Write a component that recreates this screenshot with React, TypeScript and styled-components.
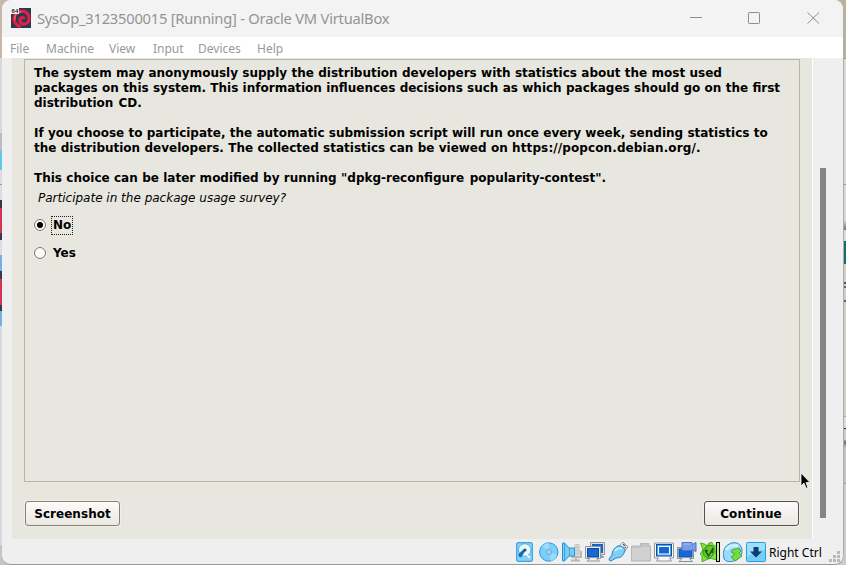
import React from "react";
import styled, { createGlobalStyle } from "styled-components";

const GlobalStyle = createGlobalStyle`
  * { box-sizing: border-box; }
  body { margin: 0; overflow: hidden; }
`;

const Desktop = styled.div`
  width: 846px;
  height: 565px;
  padding: 0 2px 0 2px;
  background:
    linear-gradient(#c9b8a8 0 58px, #d9d9d9 58px 133px, #bcbcbc 133px 151px, #5fc6ee 151px 170px, #ddd 170px 184px, #999 184px 185px, #ddd 185px 200px, #343848 200px 208px, #d83355 208px 233px, #343848 233px 240px, #ddd 240px 255px, #76b0e6 255px 271px, #343848 271px 279px, #d83355 279px 305px, #343848 305px 311px, #76b0e6 311px 326px, #d9d9d9 326px 545px, #c5c5c5 545px) 0 0 / 20px 100% no-repeat,
    linear-gradient(#b8b399 0 58px, #999 58px 59px, #dadada 59px 184px, #999 184px 185px, #dadada 185px 220px, #777 229px 230px, #ddd 230px 241px, #116e6b 241px 264px, #d0d0c6 264px 282px, #555 282px 284px, #ccc 284px 286px, #666 286px 288px, #cfcfc4 288px 300px, #666 300px 302px, #cfcfc4 302px 416px, #aaa 416px 417px, #ddd 417px 428px, #222 428px 429px, #ccc 429px 440px, #777 441px 443px, #c4c4c4 448px 483px, #999 483px 484px, #ccc 484px) 100% 0 / 20px 100% no-repeat,
    #bbb;
`;

const Window = styled.div`
  display: flex;
  flex-direction: column;
  height: 565px;
  overflow: hidden;
  border-right: 1px solid #adadad;
  border-bottom: 1px solid #999;
  border-radius: 9px;
  background: #efefef;
`;

const TitleBar = styled.header`
  display: flex;
  align-items: center;
  flex: none;
  height: 37px;
  padding: 0 23px 1px 9px;
  background: #f3f3f3;
`;

const Title = styled.div`
  flex: 1;
  margin-left: 6px;
  font: 14.7px/20px "Noto Sans", sans-serif;
  letter-spacing: -0.22px;
  white-space: nowrap;
  color: #939393;
`;

const Controls = styled.div`
  display: flex;
  gap: 46px;
`;

const MenuBar = styled.nav`
  display: flex;
  flex: none;
  align-items: center;
  height: 21px;
  padding-left: 8px;
  gap: 16px;
  background: #fff;
`;

const MenuItem = styled.span<{ $width: number }>`
  width: ${(p) => p.$width}px;
  font: 12px/21px "Noto Sans", sans-serif;
  padding-top: 1px;
  white-space: nowrap;
  color: #999;
`;

const Viewport = styled.div`
  display: flex;
  flex: none;
  height: 481px;
  padding-left: 10px;
`;

const Guest = styled.main`
  position: relative;
  display: flex;
  flex-direction: column;
  width: 800px;
  padding: 1px 12px 0;
  background: #e8e7df;
  font-family: "DejaVu Sans", sans-serif;
  color: #000;
`;

const ScrollTrack = styled.div`
  width: 14px;
  padding: 110px 0 0 7px;
  border-left: 1px solid #fff;
`;

const ScrollThumb = styled.div`
  width: 6px;
  height: 350px;
  background: #858585;
`;

const Panel = styled.section`
  height: 423px;
  border: 1px solid #bab5a5;
  padding: 6px 9px;
`;

const Paragraph = styled.div`
  margin-bottom: 15px;
`;

/* Word spacing keeps the fi and fl ligatures that letter spacing would break. */
const Line = styled.div<{ $gap: number }>`
  font-size: 12px;
  font-weight: bold;
  line-height: 15px;
  word-spacing: ${(p) => p.$gap}px;
  white-space: nowrap;
`;

const Address = styled.span`
  letter-spacing: 0.11px;
`;

const Command = styled.span`
  word-spacing: 1.5px;
`;

const Question = styled.div`
  margin: -10px 0 0 4px;
  font-size: 12px;
  font-style: italic;
  line-height: 15px;
  white-space: nowrap;
`;

const Options = styled.div`
  display: flex;
  flex-direction: column;
  gap: 8px;
  margin-top: 9px;
`;

const Option = styled.label`
  display: flex;
  align-items: center;
  height: 20px;
  gap: 5px;
`;

const Radio = styled.span<{ $checked?: boolean }>`
  width: 12px;
  height: 12px;
  border: 1px solid #77716a;
  border-radius: 50%;
  box-shadow: 0 0 0 0.6px #f7f3ed;
  background: ${(p) =>
    p.$checked ? "radial-gradient(circle, #050505 0 2.7px, #fbfdf8 3.5px)" : "#fbfdf8"};
`;

const OptionText = styled.span<{ $focused?: boolean }>`
  padding: 0 1px;
  border: 1px dotted ${(p) => (p.$focused ? "#222" : "transparent")};
  font-size: 12px;
  font-weight: bold;
  line-height: 17px;
`;

const Actions = styled.footer`
  display: flex;
  justify-content: space-between;
  margin-top: 19px;
  padding: 0 1px;
`;

const Button = styled.button<{ $primary?: boolean }>`
  width: 95px;
  height: 25px;
  padding: 1px ${(p) => (p.$primary ? 1 : 0)}px 0 0;
  border: 1px solid ${(p) => (p.$primary ? "#55534b" : "#898270")};
  border-radius: 3px;
  background: linear-gradient(#fcfcfb, #f3f1ee 50%, #e9e8e2);
  box-shadow: 0 0 0 1px #f0eee8;
  font: bold 12px/22px "DejaVu Sans", sans-serif;
  letter-spacing: ${(p) => (p.$primary ? 0.12 : 0.04)}px;
  color: #000;
`;

const Pointer = styled.svg`
  position: absolute;
  left: 788px;
  top: 414px;
`;

const StatusBar = styled.div`
  display: flex;
  justify-content: flex-end;
  align-items: flex-start;
  flex: 1;
  padding-top: 3px;
`;

const StatusIcons = styled.div`
  display: flex;
  gap: 3px;
`;

const HostKey = styled.span`
  width: 54px;
  margin: 0 6px 0 3px;
  font: 12px/21px "Noto Sans", sans-serif;
  white-space: nowrap;
  color: #000;
`;

const Grip = styled.svg`
  margin-top: 9px;
`;

const Glyph = ({ children }: { children: React.ReactNode }) => (
  <svg width="20" height="20" viewBox="0 0 20 20">{children}</svg>
);

const DebianLogo = () => (
  <svg width="20" height="20" viewBox="0 0 20 20">
    <rect width="20" height="20" fill="#30394a" />
    <path d="M8.5 18.3C3.6 16.5 1.8 11 4 7c2.2-3.9 8-5 11.500-2.2 3.7 3 3.3 9-.6 10.8-3.5 1.5-6.6-1.2-5.8-4.1.5-1.8 2.3-2.5 3.6-1.6" fill="none" stroke="#dd2049" strokeWidth="3.2" strokeLinecap="round" />
    <path d="M4 12C3 8 6 4 10.5 3.8" fill="none" stroke="#ff8296" strokeWidth="1" />
    <rect width="8" height="6" fill="#f5f5f5" />
    <text x=".6" y="5.2" fontFamily="Liberation Sans, sans-serif" fontSize="6" fontWeight="bold" fill="#222">64</text>
  </svg>
);

const DiskIcon = () => (
  <Glyph>
    <rect x=".7" y=".7" width="15.6" height="18.6" rx="1" fill="#83d2fc" stroke="#2493dc" />
    <circle cx="8.7" cy="8" r="6.2" fill="#e9f7ff" stroke="#278ecb" strokeWidth=".6" />
    <path d="M9.5 8.5 5 15.5Q1.5 15 3 11.5L8 7z" fill="#116ab3" />
    <circle cx="9" cy="8" r="1.5" fill="#15558c" />
    <path d="m10 12 4 4" stroke="#fff" strokeWidth="1.5" />
  </Glyph>
);

const DiscIcon = () => (
  <Glyph>
    <circle cx="9.8" cy="10" r="9.2" fill="#7bcffb" stroke="#2999dc" />
    <path d="M10 10 3 4q3-3 7-3zM10 10l8 3q-2 5-6 6z" fill="#99dcff" />
    <circle cx="10" cy="10" r="2.7" fill="#b9eaff" stroke="#3a9cd5" strokeWidth=".7" />
    <circle cx="10" cy="10" r="1.2" fill="#fff" stroke="#777" strokeWidth=".6" />
  </Glyph>
);

const AudioIcon = () => (
  <Glyph>
    <rect x="12" y="2" width="6" height="12" rx="2" fill="#c4c4c4" />
    <path d="M10 10v5h9V9M14 15v4M9 18.5h9" fill="none" stroke="#b8b8b8" strokeWidth="2" />
    <path d="M12 4h6M12 7h6M12 10h6M12 13h6" stroke="#e4e4e4" />
    <path d="M.5 1h2L7 6h5.5v8H7l-4.5 5h-2z" fill="#7acbf6" stroke="#2795d5" />
    <path d="M2.5 1v18M7.5 6v8" stroke="#2795d5" strokeWidth=".7" />
  </Glyph>
);

const NetworkIcon = () => (
  <Glyph>
    <path d="M5.5.5h14v12h-3v2h2v1H8v-2H5.5z" fill="#e1e1e1" stroke="#8d989e" />
    <rect x="7" y="2" width="11" height="9" fill="#1763c2" />
    <path d="M.5 4.5h15v12h-4l3 2.5H2l3-2.5H.5z" fill="#ededed" stroke="#8d989e" />
    <rect x="2.5" y="6.5" width="11" height="8.5" fill="#1769d2" stroke="#0e489a" />
  </Glyph>
);

const UsbIcon = () => (
  <Glyph>
    <path d="m11 4 4-4 5 5-4 5z" fill="#f1f1f1" stroke="#92999d" />
    <path d="m15 2 2 2M17 5l1 1" stroke="#555" strokeWidth="1.2" />
    <path d="M10 4q3-1 6 2 2 3 0 5-2 5-8 5l-5 3q-2 0-2-2l3-4Q4 7 10 4z" fill="#80cef7" stroke="#2b86c1" />
    <path d="M7 9q3-4 7-2" fill="none" stroke="#c1eeff" strokeWidth="2" />
  </Glyph>
);

const FolderIcon = () => (
  <Glyph>
    <path d="M.5 19V4h9V1.500H18V4h1.500v15z" fill="#c5c5c5" stroke="#b8b8b8" />
    <path d="M1 6q8 1 11-1h7v13H1z" fill="#d1d1d1" />
  </Glyph>
);

const DisplayIcon = () => (
  <Glyph>
    <path d="M.5 1h19v15h-4l2 3h-15l2-3h-4z" fill="#f8f8f8" stroke="#8e9ba1" />
    <rect x="2.5" y="2.5" width="15" height="11.5" fill="#4ca3ef" stroke="#164f9d" />
    <rect x="4.5" y="4.5" width="11" height="7.5" fill="#1269d3" stroke="#fff" />
  </Glyph>
);

const RecordingIcon = () => (
  <Glyph>
    <path d="M.5 5.5h16v11h-4l3 3H2l3-3H.5z" fill="#ededed" stroke="#87939a" />
    <rect x="2" y="7" width="13" height="8" fill="#1768d0" stroke="#1151a8" />
    <path d="M5 .5h10v2l4-2v9l-4-2v1H5z" fill="#789ce9" stroke="#4a75c8" />
    <path d="M6 2h8" stroke="#a8c1fa" />
  </Glyph>
);

const TurtleIcon = () => (
  <Glyph>
    <path d="M.5 1l4 1 3 2Q8 0 12 .5L14 4l4-1v4l-3 3 2 3v5l-4-1-3-1-4 2-4 2V14L0 12l3-4z" fill="#7ee33b" stroke="#3a9a19" strokeWidth=".8" />
    <path d="M7 4q5-2 7 2 1 7-5 11-7-3-6-9z" fill="#62c92b" stroke="#318c1b" />
    <path d="m5 8 3.5 6L13 6M5 8l3 1M13 6l-1 5" fill="none" stroke="#255d17" strokeWidth="1.5" />
    <rect x="16.5" y=".5" width="3" height="19" fill="#b9f58c" stroke="#000" />
  </Glyph>
);

const MouseIcon = () => (
  <Glyph>
    <path d="M1 17Q-2 5 8 1q9-2 11 6 1 9-8 12-7 2-10-2z" fill="#98dbff" stroke="#388fc6" />
    <path d="M3 8q5-6 12-4" fill="none" stroke="#c9f0ff" strokeWidth="3" />
    <path d="m9 8 7-2 2 3-2 2 3 3-7 5-4-4 4-3-4-2z" fill="#70dd40" stroke="#419628" strokeWidth=".8" />
  </Glyph>
);

const HostIcon = () => (
  <Glyph>
    <rect x=".5" y=".5" width="19" height="19" rx="1" fill="#74cefa" stroke="#2a9dda" />
    <path d="M1 1h18v7Q10 8 1 15z" fill="#9be1ff" />
    <path d="M7.5 5h5v4.5H16l-6 6-6-6h3.5z" fill="#123c72" />
  </Glyph>
);

const statusIcons = [DiskIcon, DiscIcon, AudioIcon, NetworkIcon, UsbIcon, FolderIcon, DisplayIcon, RecordingIcon, TurtleIcon, MouseIcon, HostIcon];

const menus: [string, number][] = [["File", 20], ["Machine", 47], ["View", 28], ["Input", 29], ["Devices", 43], ["Help", 26]];

export default function App() {
  return (
    <>
      <GlobalStyle />
      <Desktop>
        <Window>
          <TitleBar>
            <DebianLogo />
            <Title>SysOp_3123500015 [Running] - Oracle VM VirtualBox</Title>
            <Controls>
              <svg width="12" height="12"><path d="M0 5.5h12" stroke="#929292" /></svg>
              <svg width="12" height="12"><rect x=".5" y=".5" width="11" height="11" rx=".8" fill="none" stroke="#8d8d8d" /></svg>
              <svg width="14" height="12"><path d="m1.5.5 11.5 11M13 .5 1.5 11.5" stroke="#8d8d8d" /></svg>
            </Controls>
          </TitleBar>
          <MenuBar>
            {menus.map(([name, width]) => <MenuItem key={name} $width={width}>{name}</MenuItem>)}
          </MenuBar>
          <Viewport>
            <Guest>
              <Panel>
                <Paragraph>
                  <Line $gap={0.15}>The system may anonymously supply the distribution developers with statistics about the most used</Line>
                  <Line $gap={0.12}>packages on this system. This information influences decisions such as which packages should go on the first</Line>
                  <Line $gap={1}>distribution CD.</Line>
                </Paragraph>
                <Paragraph>
                  <Line $gap={0.07}>If you choose to participate, the automatic submission script will run once every week, sending statistics to</Line>
                  <Line $gap={0.17}>the distribution developers. The collected statistics can be viewed on <Address>https://popcon.debian.org/.</Address></Line>
                </Paragraph>
                <Paragraph>
                  <Line $gap={0.2}>This choice can be later modified by running <Command>"dpkg-reconfigure popularity-contest".</Command></Line>
                </Paragraph>
                <Question>Participate in the package usage survey?</Question>
                <Options>
                  <Option><Radio $checked /><OptionText $focused>No</OptionText></Option>
                  <Option><Radio /><OptionText>Yes</OptionText></Option>
                </Options>
              </Panel>
              <Actions>
                <Button>Screenshot</Button>
                <Button $primary>Continue</Button>
              </Actions>
              <Pointer width="12" height="18" viewBox="0 0 12 18">
                <path d="M1 1v13l3-3 2 5h2l-2-5.5h4z" fill="#000" stroke="#f5f5f5" strokeWidth=".8" />
              </Pointer>
            </Guest>
            <ScrollTrack><ScrollThumb /></ScrollTrack>
          </Viewport>
          <StatusBar>
            <StatusIcons>{statusIcons.map((Icon, i) => <Icon key={i} />)}</StatusIcons>
            <HostKey>Right Ctrl</HostKey>
            <Grip width="14" height="12" viewBox="0 0 14 12">
              <path d="M8 0h3v3H8zM4 4h3v3H4zM8 4h3v3H8zM0 8h3v3H0zM4 8h3v3H4zM8 8h3v3H8z" fill="#b9b9b9" />
            </Grip>
          </StatusBar>
        </Window>
      </Desktop>
    </>
  );
}
